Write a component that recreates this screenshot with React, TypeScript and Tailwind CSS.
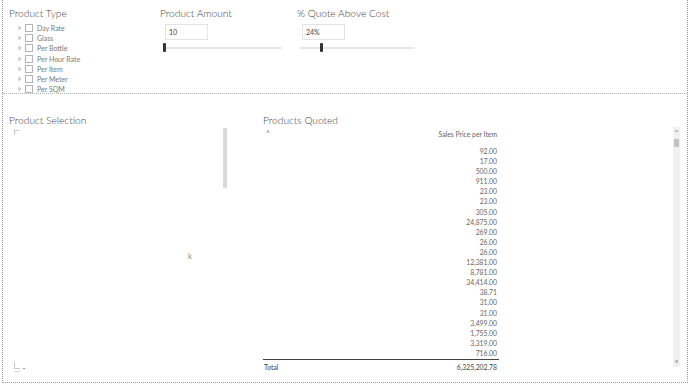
import React from "react";

const FONT = { fontFamily: '"Segoe UI", Lato, "Open Sans", sans-serif' };

const types = ["Day Rate", "Glass", "Per Bottle", "Per Hour Rate", "Per Item", "Per Meter", "Per SQM"];
const values = [
  "92.00", "17.00", "500.00", "911.00", "23.00", "23.00", "305.00", "24,875.00", "269.00", "26.00", "26.00",
  "12,381.00", "8,781.00", "34,414.00", "38.71", "31.00", "31.00", "3,499.00", "1,755.00", "3,319.00", "716.00",
];

const TITLE = "text-[10.2px] leading-[14px] text-[#444] font-light";

function Slicer({ title, value, thumb, width }: { title: string; value: string; thumb: number; width: number }) {
  return (
    <div className="flex flex-col">
      <div className={TITLE}>{title}</div>
      <div className="ml-[5px] mt-[4px] w-[43px] h-[16px] border border-[#e3e3e3] bg-white text-[7px] leading-[14px] pl-[3px] text-[#444]">
        {value}
      </div>
      <div className="relative ml-[3px] mt-[3px] h-[10px]" style={{ width }}>
        <div className="absolute left-0 right-0 top-[4px] h-[2px] bg-[#e6e6e6]" />
        <div className="absolute top-[0px] w-[3px] h-[9px] rounded-[1px] bg-[#333]" style={{ left: thumb }} />
      </div>
    </div>
  );
}

export default function App() {
  return (
    <div className="relative w-[690px] h-[385px] bg-white overflow-hidden text-[#555]" style={FONT}>
      {/* dotted frame */}
      <div className="absolute left-[2px] top-0 w-[686px] h-[383px] border-l border-r border-b border-dotted border-[#9a9a9a]" />
      <div className="absolute left-[3px] top-[93px] w-[684px] border-t border-dotted border-[#b0b0b0]" />

      {/* top row slicers */}
      <div className="absolute left-[9px] top-[6px]">
        <div className={TITLE}>Product Type</div>
        <div className="mt-[3px] flex flex-col">
          {types.map((t) => (
            <div key={t} className="flex items-center h-[10.2px]">
              <svg width="8" height="8" viewBox="0 0 8 8" className="ml-[7px]">
                <path d="M2.5 1.5 L5.5 4 L2.5 6.5 Z" fill="#c4c4c4" />
              </svg>
              <div className="ml-[1px] w-[8px] h-[8px] border border-[#b4b4b4] bg-white" />
              <span className="ml-[4px] text-[7px] leading-[10px] text-[#7a7a7a]">{t}</span>
            </div>
          ))}
        </div>
      </div>

      <div className="absolute left-[160px] top-[6px]">
        <Slicer title="Product Amount" value="10" thumb={0} width={119} />
      </div>
      <div className="absolute left-[297px] top-[6px]">
        <Slicer title="% Quote Above Cost" value="24%" thumb={20} width={114} />
      </div>

      {/* Product Selection */}
      <div className="absolute left-[9px] top-[113px] w-[240px] h-[265px]">
        <div className={TITLE}>Product Selection</div>
        <div className="absolute left-[5px] top-[17px] w-[5px] h-[5px] border-l border-t border-[#c8c8c8]" />
        <div className="absolute left-[214px] top-[15px] w-[4px] h-[60px] bg-[#d9d9d9]" />
        <div className="absolute left-[179px] top-[139px] text-[7.5px] leading-[10px] text-[#888]">k</div>
        <div className="absolute left-[5px] top-[249px] flex items-end">
          <div className="flex flex-col">
            <div className="w-[6px] h-[7px] border-l border-b border-[#c8c8c8]" />
            <div className="mt-[2px] w-[6px] h-[1px] bg-[#d8d8d8]" />
          </div>
          <div className="ml-[3px] mb-[3px] w-[2px] h-[1px] bg-[#999]" />
        </div>
      </div>

      {/* Products Quoted */}
      <div className="absolute left-[263px] top-[113px] w-[418px] h-[262px]">
        <div className={TITLE}>Products Quoted</div>
        <div className="flex">
          <div className="w-[236px] flex flex-col">
            <div className="flex justify-between items-start h-[18px] pt-[3px]">
              <span className="ml-[3px] text-[7px] leading-[7px] text-[#777]">^</span>
              <span className="mr-[2px] text-[6.8px] leading-[9px] text-[#666]">Sales Price per Item</span>
            </div>
            <div className="h-[214px] overflow-hidden flex flex-col items-end pr-[2px] pt-[1px]">
              {values.map((v, i) => (
                <div key={i} className="h-[10.1px] text-[6.8px] leading-[10px] text-[#666]">{v}</div>
              ))}
            </div>
            <div className="border-t border-[#444] flex justify-between pt-[2px] text-[6.8px] leading-[10px] text-[#444]">
              <span className="ml-[1px]">Total</span>
              <span className="mr-[2px]">6,325,202.78</span>
            </div>
          </div>
        </div>
        {/* scrollbar */}
        <div className="absolute left-[410px] top-[14px] w-[7px] h-[240px] bg-[#f0f0f0] flex flex-col items-center">
          <div className="text-[6px] leading-[8px] text-[#666] mt-[1px]">^</div>
          <div className="mt-[3px] w-[5px] h-[8px] bg-[#c2c2c2]" />
          <div className="flex-1" />
          <div className="text-[6px] leading-[8px] text-[#666] mb-[2px]">v</div>
        </div>
      </div>
    </div>
  );
}
